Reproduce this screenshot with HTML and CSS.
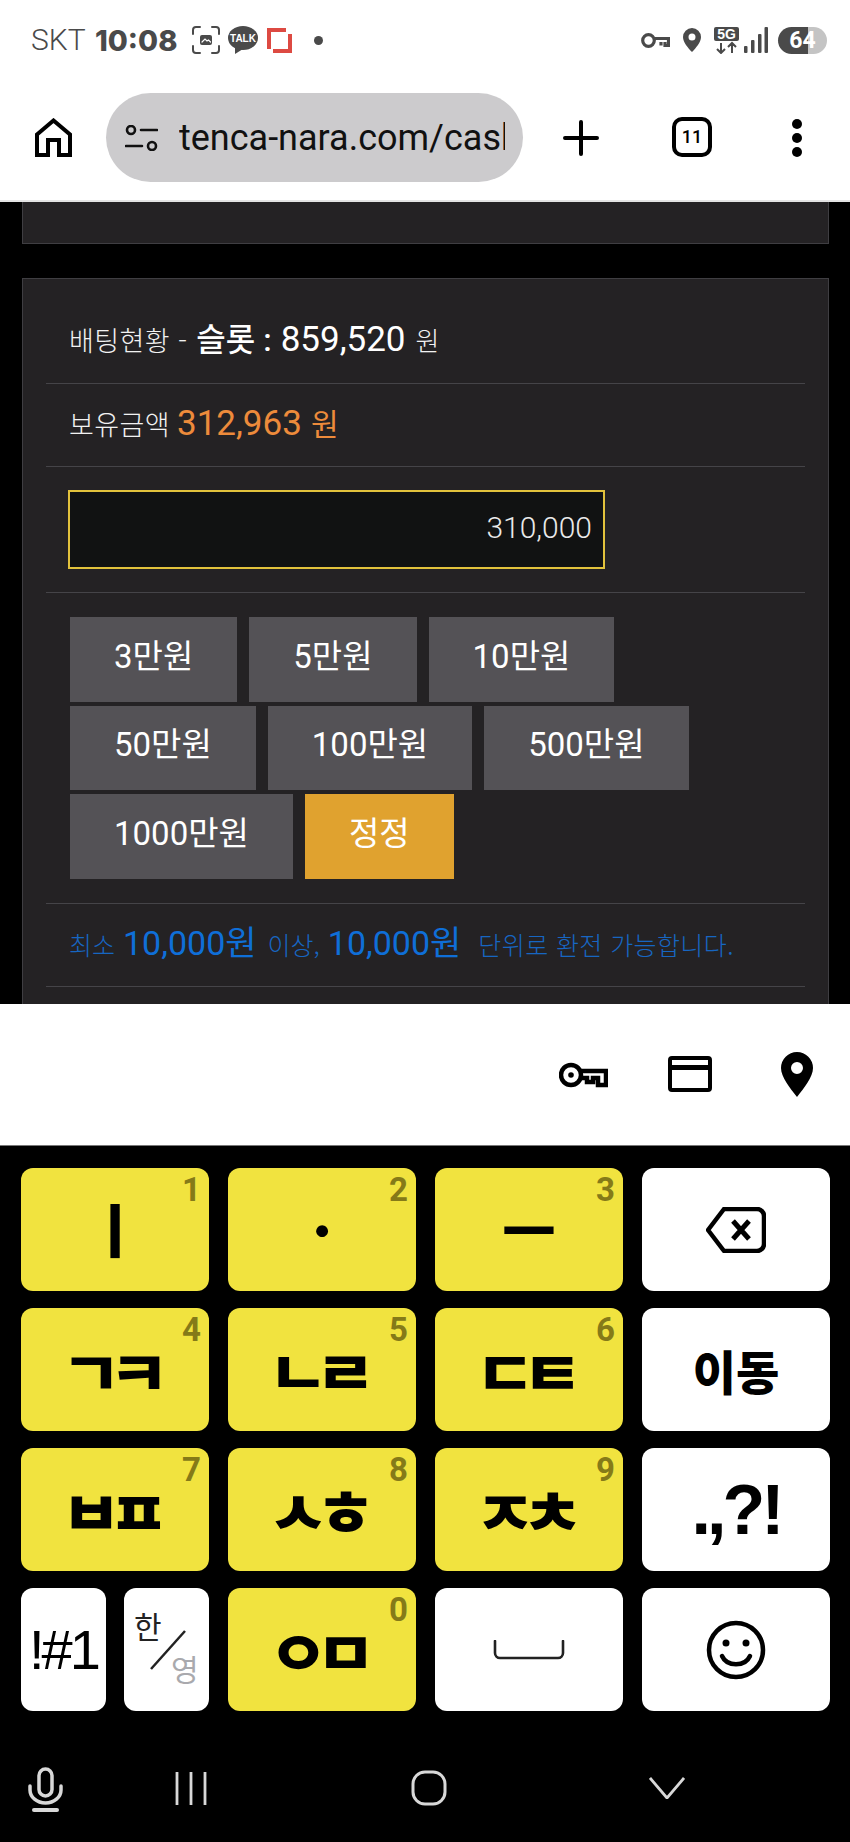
FILE: index.html
```html
<!DOCTYPE html>
<html lang="ko">
<head>
<meta charset="utf-8">
<title>tenca-nara.com</title>
<link rel="stylesheet" href="styles.css">
</head>
<body>
<header class="status">
  <div class="status-left">
    <span class="carrier">SKT</span>
    <span class="clock">10:08</span>
    <svg class="ic-shot" viewBox="0 0 28 28" fill="none" stroke="#4a4a4a" stroke-width="2" stroke-linecap="round"><path d="M1 8V4a3 3 0 0 1 3-3h4M20 1h4a3 3 0 0 1 3 3v4M27 20v4a3 3 0 0 1-3 3h-4M8 27H4a3 3 0 0 1-3-3v-4"/><rect x="8" y="9" width="12" height="10" rx="2" fill="#4a4a4a" stroke="none"/><path d="M10 16l3-3 2 2 1.500-1 2 2" stroke="#fff" stroke-width="1.200"/></svg>
    <svg class="ic-talk" viewBox="0 0 30 28"><ellipse cx="15" cy="12" rx="15" ry="12" fill="#4a4a4a"/><path d="M7 20l0 8 8-5z" fill="#4a4a4a"/><text x="15" y="16" class="talk-text">TALK</text></svg>
    <svg class="ic-red" viewBox="0 0 25 25" fill="none" stroke="#dd4a42" stroke-width="4"><path d="M19 2H2v19M23 6v17H6"/></svg>
    <span class="dot"></span>
  </div>
  <div class="status-right">
    <svg class="ic-skey" viewBox="0 0 29 15" fill="none" stroke="#4a4a4a" stroke-width="3.200"><circle cx="7.500" cy="7.500" r="5.800"/><path d="M13 5.500h14.500v7h-3.500V9M20 9v3.500"/></svg>
    <svg class="ic-sloc" viewBox="0 0 18 24"><path fill="#4a4a4a" fill-rule="evenodd" d="M9 0a9 9 0 0 1 9 9c0 5-5 11-9 15C5 20 0 14 0 9a9 9 0 0 1 9-9zm0 5.500a3.500 3.500 0 1 0 0 7 3.500 3.500 0 0 0 0-7z"/></svg>
    <svg class="ic-5g" viewBox="0 0 25 27"><rect width="25" height="14" rx="2" fill="#4a4a4a"/><text x="12.500" y="12" class="g-text">5G</text><path d="M7 16v10M3 22l4 4 4-4M18 26V16M14 20l4-4 4 4" stroke="#4a4a4a" stroke-width="2" fill="none"/></svg>
    <svg class="ic-sig" viewBox="0 0 24 26" fill="#4a4a4a"><rect x="0" y="19" width="3.500" height="7" rx="1"/><rect x="7" y="13" width="3.500" height="13" rx="1"/><rect x="14" y="7" width="3.500" height="19" rx="1"/><rect x="20.500" y="0" width="3.500" height="26" rx="1"/></svg>
    <div class="battery">64</div>
  </div>
</header>

<nav class="toolbar">
  <svg class="ic-home" viewBox="0 0 37 39" fill="none" stroke="#000" stroke-width="4"><path d="M2 16.500 18.500 2.500 35 16.500V37H24V22H13V37H2Z"/></svg>
  <div class="omnibox">
    <svg class="ic-tune" viewBox="0 0 33 26" fill="none" stroke="#111" stroke-width="2.600" stroke-linecap="round"><circle cx="6" cy="5" r="4"/><path d="M16 5H32M1 21H17"/><circle cx="27" cy="21" r="4"/></svg>
    <div class="url">tenca-nara.com/cash</div>
  </div>
  <svg class="ic-plus" viewBox="0 0 36 36" stroke="#000" stroke-width="4" stroke-linecap="round"><path d="M18 2V34M2 18H34"/></svg>
  <div class="tabs">11</div>
  <div class="more"><i></i><i></i><i></i></div>
</nav>

<main class="page">
  <div class="panel panel-top"></div>
  <section class="panel panel-main">
    <div class="row row-status">
      <span class="t-label">배팅현황 -</span>
      <strong class="t-game">슬롯 :</strong>
      <span class="t-amount">859,520</span>
      <span class="t-unit">원</span>
    </div>
    <div class="row row-balance">
      <span class="t-label">보유금액</span>
      <span class="t-orange">312,963</span>
      <span class="t-orange-unit">원</span>
    </div>
    <div class="row row-input">
      <div class="field">310,000</div>
    </div>
    <div class="row row-buttons">
      <button class="btn">3만원</button>
      <button class="btn">5만원</button>
      <button class="btn">10만원</button>
      <button class="btn">50만원</button>
      <button class="btn">100만원</button>
      <button class="btn">500만원</button>
      <button class="btn">1000만원</button>
      <button class="btn btn-reset">정정</button>
    </div>
    <div class="row row-note">
      <span class="n-small">최소</span>
      <span class="n-big">10,000원</span>
      <span class="n-small">이상,</span>
      <span class="n-big">10,000원</span>
      <span class="n-small n-last">단위로 환전 가능합니다.</span>
    </div>
    <div class="row row-empty"></div>
  </section>
</main>

<div class="suggest">
  <svg class="ic-key" viewBox="0 0 49 26" fill="none" stroke="#000" stroke-width="4.500"><circle cx="12" cy="13" r="10"/><circle cx="12" cy="13" r="2.800" fill="#000" stroke="none"/><path d="M22 9H47V23H39V16H34V20H28V16H22"/></svg>
  <svg class="ic-card" viewBox="0 0 44 36" fill="none" stroke="#000" stroke-width="4"><rect x="2" y="2" width="40" height="32" rx="2"/><path d="M2 11.500H42" stroke-width="5"/></svg>
  <svg class="ic-pin" viewBox="0 0 32 45"><path fill="#000" fill-rule="evenodd" d="M16 0a16 16 0 0 1 16 16c0 9-9 20-16 29C9 36 0 25 0 16A16 16 0 0 1 16 0zm0 10a6 6 0 1 0 0 12 6 6 0 0 0 0-12z"/></svg>
</div>

<section class="keyboard">
  <div class="keys">
    <div class="key yellow"><sup>1</sup><span class="single">ㅣ</span></div>
    <div class="key yellow"><sup>2</sup><span class="single">ㆍ</span></div>
    <div class="key yellow"><sup>3</sup><span class="single">ㅡ</span></div>
    <div class="key white">
      <svg class="ic-back" viewBox="0 0 60 46" fill="none" stroke="#000" stroke-width="4.500" stroke-linejoin="round"><path d="M18 2H51a7 7 0 0 1 7 7V37a7 7 0 0 1-7 7H18L2 23Z"/><path d="M27 14 43 32M43 14 27 32" stroke-width="5"/></svg>
    </div>
    <div class="key yellow"><sup>4</sup><span class="jamo">ㄱㅋ</span></div>
    <div class="key yellow"><sup>5</sup><span class="jamo">ㄴㄹ</span></div>
    <div class="key yellow"><sup>6</sup><span class="jamo">ㄷㅌ</span></div>
    <div class="key white"><span class="move">이동</span></div>
    <div class="key yellow"><sup>7</sup><span class="jamo">ㅂㅍ</span></div>
    <div class="key yellow"><sup>8</sup><span class="jamo">ㅅㅎ</span></div>
    <div class="key yellow"><sup>9</sup><span class="jamo">ㅈㅊ</span></div>
    <div class="key white"><span class="punct">.,?!</span></div>
    <div class="split">
      <div class="key white"><span class="sym">!#1</span></div>
      <div class="key white lang">
        <span class="lang-ko">한</span>
        <svg class="ic-slash" viewBox="0 0 36 40" stroke="#222" stroke-width="2.500"><path d="M35 1 1 39"/></svg>
        <span class="lang-en">영</span>
      </div>
    </div>
    <div class="key yellow"><sup>0</sup><span class="jamo">ㅇㅁ</span></div>
    <div class="key white">
      <svg class="ic-space" viewBox="0 0 72 20" fill="none" stroke="#222" stroke-width="2.600" stroke-linecap="round"><path d="M2 1V13a5 5 0 0 0 5 5H65a5 5 0 0 0 5-5V1"/></svg>
    </div>
    <div class="key white">
      <svg class="ic-smile" viewBox="0 0 60 60" fill="none" stroke="#000" stroke-width="4.500" stroke-linecap="round"><circle cx="30" cy="30" r="27"/><circle cx="20" cy="23" r="3.500" fill="#000" stroke="none"/><circle cx="40" cy="23" r="3.500" fill="#000" stroke="none"/><path d="M16 36C21 47 39 47 44 36"/></svg>
    </div>
  </div>
  <div class="navbar">
    <svg class="ic-mic" viewBox="0 0 35 45" fill="none" stroke="#d8d8d8" stroke-width="3.500" stroke-linecap="round"><rect x="11" y="2" width="13" height="27" rx="6.500"/><path d="M2 19v4a15.500 13 0 0 0 31 0v-4"/><path d="M6 43H29" stroke-width="4"/></svg>
    <svg class="ic-recents" viewBox="0 0 32 33" stroke="#d8d8d8" stroke-width="2.800"><path d="M2 0V33M16 0V33M30 0V33"/></svg>
    <svg class="ic-navhome" viewBox="0 0 36 36" fill="none" stroke="#d8d8d8" stroke-width="3"><rect x="2" y="2" width="32" height="32" rx="12"/></svg>
    <svg class="ic-chevron" viewBox="0 0 36 22" fill="none" stroke="#d8d8d8" stroke-width="2.800"><path d="M1 1 18 21 35 1"/></svg>
  </div>
</section>
</body>
</html>
```

FILE: styles.css
```css
* { box-sizing: border-box; }
html, body { margin: 0; padding: 0; }
body {
  width: 850px;
  height: 1842px;
  overflow: hidden;
  display: flex;
  flex-direction: column;
  background: #000;
  font-family: "Noto Sans CJK KR", "Noto Sans", sans-serif;
}
svg { display: block; flex: none; }

/* status bar */
.status {
  height: 75px;
  flex: none;
  background: #fff;
  display: flex;
  align-items: center;
  justify-content: space-between;
  padding: 5px 23px 0 31px;
  color: #4a4a4a;
}
.status-left, .status-right { display: flex; align-items: center; }
.carrier { font: 300 30px/1 Roboto, sans-serif; width: 64px; }
.clock { font: 800 29px/1 Inter, sans-serif; width: 97px; }
.ic-shot { width: 28px; height: 28px; margin-right: 8px; }
.ic-talk { width: 30px; height: 28px; margin-right: 9px; }
.talk-text { font: 700 10px "Liberation Sans", sans-serif; fill: #fff; text-anchor: middle; }
.ic-red { width: 25px; height: 25px; }
.dot { width: 9px; height: 9px; border-radius: 50%; background: #4a4a4a; margin-left: 22px; }
.ic-skey { width: 29px; height: 15px; margin-right: 13px; }
.ic-sloc { width: 18px; height: 24px; margin-right: 13px; }
.ic-5g { width: 25px; height: 27px; margin-right: 5px; }
.ic-sig { width: 24px; height: 26px; margin-right: 10px; }
.g-text { font: 700 14px "Liberation Sans", sans-serif; fill: #fff; text-anchor: middle; }
.battery {
  width: 49px;
  height: 27px;
  border-radius: 14px;
  background: linear-gradient(90deg, #4a4a4a 0 30px, #c4c4c4 30px);
  color: #fff;
  font: 700 23px/27px Roboto, sans-serif;
  text-align: center;
}

/* browser toolbar */
.toolbar {
  height: 127px;
  flex: none;
  background: #fff;
  border-bottom: 2px solid #e4e4e4;
  display: flex;
  align-items: flex-start;
  padding: 18px 0 0 35px;
}
.ic-home { width: 37px; height: 39px; margin: 25px 34px 0 0; }
.omnibox {
  width: 417px;
  height: 89px;
  border-radius: 45px;
  background: #cccbcd;
  display: flex;
  align-items: center;
  padding-left: 19px;
  margin-right: 40px;
}
.ic-tune { width: 33px; height: 26px; margin-right: 21px; }
.url {
  width: 326px;
  overflow: hidden;
  white-space: nowrap;
  color: #111;
  font: 400 36px/46px Roboto, sans-serif;
}
.ic-plus { width: 36px; height: 36px; margin: 27px 73px 0 0; }
.tabs {
  width: 40px;
  height: 40px;
  margin: 24px 80px 0 0;
  border: 4px solid #000;
  border-radius: 10px;
  color: #000;
  font: 500 18px/32px Roboto, sans-serif;
  text-align: center;
}
.more { display: flex; flex-direction: column; gap: 4px; margin-top: 26px; }
.more i { width: 10px; height: 10px; border-radius: 50%; background: #000; }

/* page */
.page {
  height: 802px;
  flex: none;
  overflow: hidden;
  background: #000;
  padding: 0 22px;
}
.panel {
  background: #242224;
  border: 1px solid #3f3e42;
  width: 807px;
}
.panel-top { height: 42px; border-top: 0; }
.panel-main { margin-top: 34px; padding: 0 23px; }
.row { border-bottom: 1px solid #454448; display: flex; align-items: center; padding-left: 23px; }
.row-status { height: 105px; align-items: baseline; padding-top: 41px; color: #f2f2f2; }
.row-balance { height: 83px; align-items: baseline; padding-top: 16px; color: #f2f2f2; }
.t-label { font-size: 27px; font-weight: 300; letter-spacing: .4px; margin-right: 9px; }
.row-balance .t-label { margin-right: 7px; }
.t-game { font: 500 32px/1 Roboto, "Noto Sans CJK KR", sans-serif; color: #fff; margin-right: 9px; }
.t-amount { font: 400 35px/1 Roboto, sans-serif; color: #fff; margin-right: 10px; }
.t-unit { font-size: 26px; font-weight: 300; }
.t-orange { font: 400 35px/1 Roboto, sans-serif; color: #ed8b3b; margin-right: 9px; }
.t-orange-unit { font-size: 30px; font-weight: 400; color: #ed8b3b; }
.row-input { height: 126px; padding-left: 22px; }
.field {
  width: 537px;
  height: 79px;
  background: #111212;
  border: 2px solid #e2c23c;
  padding: 0 11px 3px 0;
  color: #eaeaea;
  font: 300 30px/71px Roboto, sans-serif;
  text-align: right;
}
.row-buttons {
  height: 311px;
  flex-wrap: wrap;
  align-content: flex-start;
  gap: 4px 12px;
  padding: 24px 40px 0 24px;
}
.btn {
  height: 84.500px;
  padding: 0 44px 6px;
  border: 0;
  background: #545256;
  color: #fff;
  font: 400 33px/1 Roboto, "Noto Sans CJK KR", sans-serif;
}
.btn-reset { background: #e0a22f; }
.row-note {
  height: 83px;
  color: #1766c2;
  align-items: baseline;
  padding-top: 22px;
}
.n-small { font-size: 25px; font-weight: 300; margin-right: 8px; }
.n-big { font: 400 34px/1 Roboto, "Noto Sans CJK KR", sans-serif; color: #0f6fd8; margin-right: 11px; }
.n-last { margin-left: 6px; letter-spacing: .4px; }
.row-empty { height: 300px; border: 0; }

/* suggestion strip */
.suggest {
  height: 142px;
  flex: none;
  background: #fff;
  border-bottom: 1px solid #777;
  display: flex;
  align-items: center;
  justify-content: flex-end;
  padding: 0 37px 1px 0;
}
.ic-key { width: 49px; height: 26px; margin-right: 60px; margin-top: 2px; }
.ic-card { width: 44px; height: 36px; margin-right: 69px; }
.ic-pin { width: 32px; height: 45px; }

/* keyboard */
.keyboard { flex: 1; background: #000; padding: 22px 21px 0; }
.keys {
  display: grid;
  grid-template-columns: repeat(4, 188px);
  grid-template-rows: repeat(4, 123px);
  gap: 17px 19px;
}
.key {
  position: relative;
  border-radius: 12px;
  display: flex;
  align-items: center;
  justify-content: center;
  color: #000;
}
.yellow { background: #f1e33f; }
.white { background: #fff; }
.key sup {
  position: absolute;
  top: 2px;
  right: 8px;
  color: #857a18;
  font: 700 33px/1.200 Roboto, sans-serif;
}
.jamo {
  font-size: 60px;
  font-weight: 900;
  line-height: 1;
  letter-spacing: -12px;
  padding-right: 12px;
  transform: scaleX(1.1);
}
.single { font-size: 58px; font-weight: 900; line-height: 1; margin-bottom: 4px; }
.move { font-size: 47px; font-weight: 800; line-height: 1; }
.punct { font: 700 70px/1 "Liberation Sans", sans-serif; letter-spacing: -4px; }
.split { display: grid; grid-template-columns: 85px 85px; gap: 18px; }
.sym { font: 400 56px/1 "Liberation Sans", sans-serif; letter-spacing: -3px; }
.lang { flex-direction: column; align-items: flex-start; justify-content: flex-start; }
.lang-ko { font-size: 30px; line-height: 1; margin: 22px 0 0 10px; color: #222; }
.lang-en { font-size: 30px; line-height: 1; margin: 13px 0 0 47px; color: #a9a9ad; }
.ic-slash { position: absolute; left: 26px; top: 42px; width: 36px; height: 40px; }
.ic-back { width: 60px; height: 46px; }
.ic-space { width: 72px; height: 20px; }
.ic-smile { width: 60px; height: 60px; }

/* navigation */
.navbar { display: flex; align-items: center; height: 45px; margin: 56px 0 0 7px; }
.ic-mic { width: 35px; height: 45px; margin-right: 112px; }
.ic-recents { width: 32px; height: 33px; margin-right: 204px; margin-top: -3px; }
.ic-navhome { width: 36px; height: 36px; margin-right: 202px; margin-top: -3px; }
.ic-chevron { width: 36px; height: 22px; margin-top: -3px; }
```
